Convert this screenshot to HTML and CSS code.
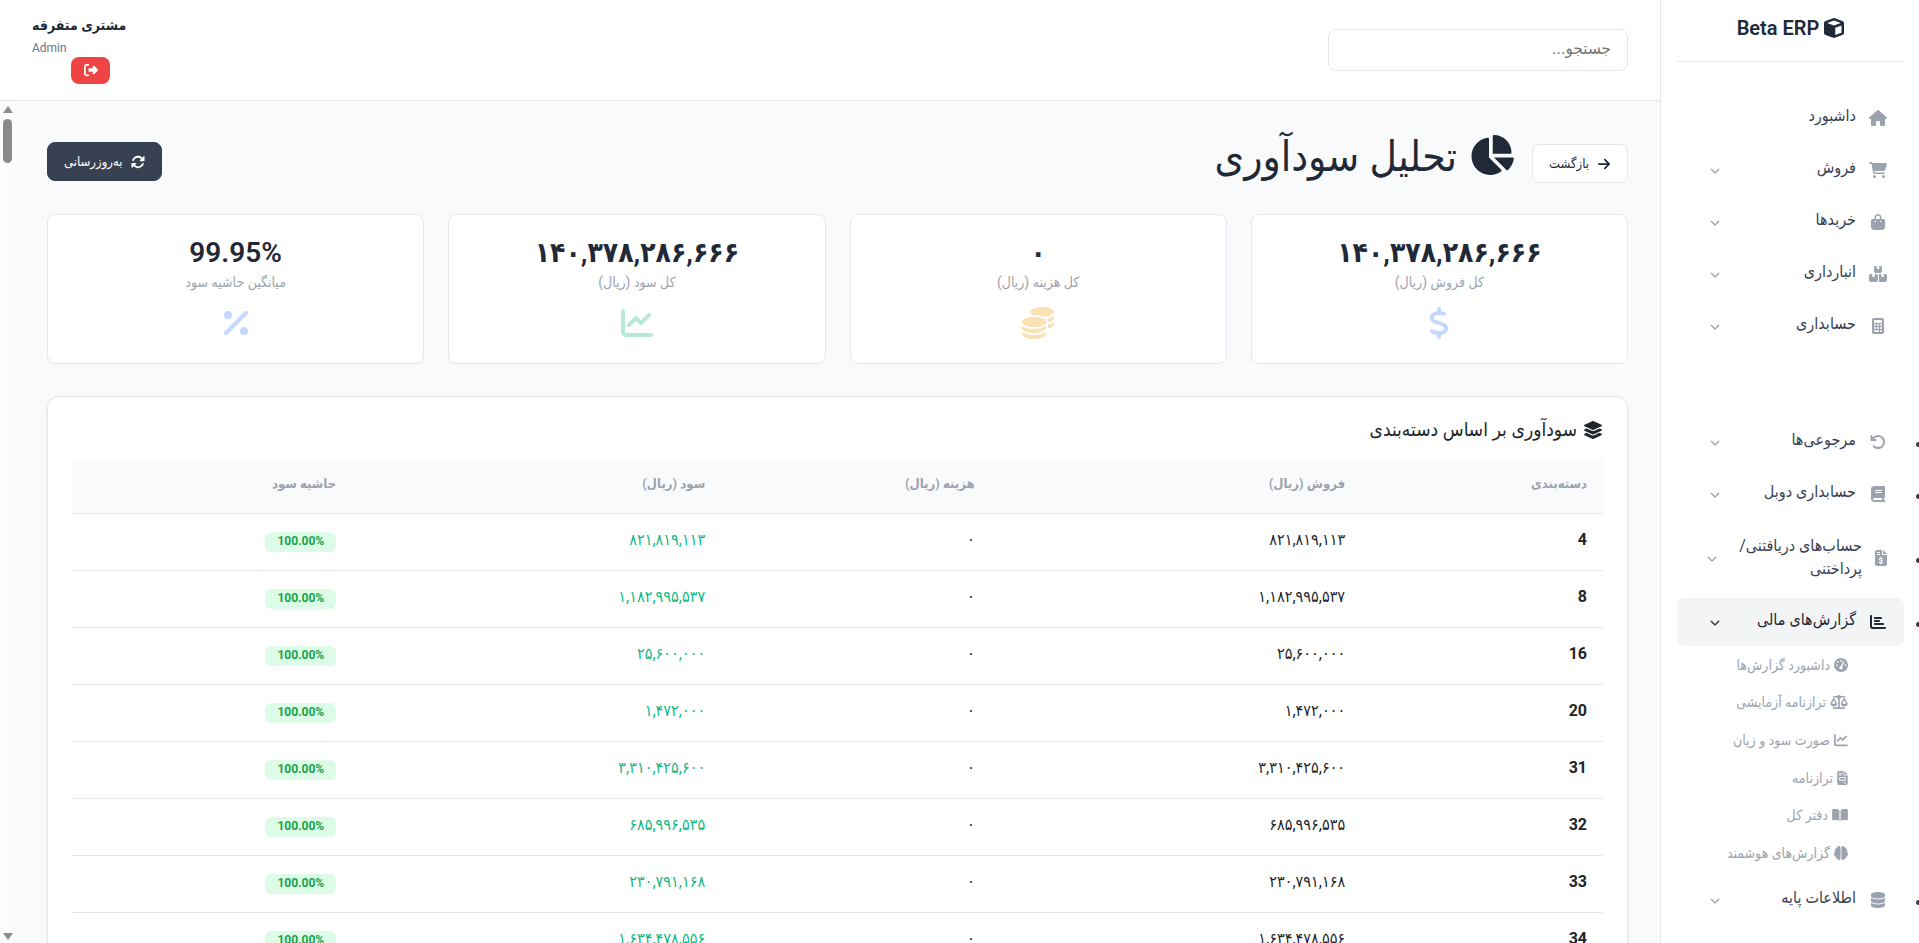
FILE: index.html
```html
<!DOCTYPE html>
<html lang="fa" dir="rtl">
<head>
<meta charset="utf-8">
<meta name="viewport" content="width=device-width, initial-scale=1">
<title>تحلیل سودآوری - Beta ERP</title>
<link rel="stylesheet" href="styles.css">
</head>
<body>
<svg class="sprite" aria-hidden="true">
  <symbol id="cube" viewBox="0 0 512 512"><path d="M234.5 5.7c13.9-5 29.1-5 43.1 0l192 68.6C495 83.4 512 107.5 512 134.6V377.4c0 27-17 51.2-42.5 60.3l-192 68.6c-13.9 5-29.1 5-43.1 0l-192-68.6C17 428.6 0 404.5 0 377.4V134.6c0-27 17-51.2 42.5-60.3l192-68.6zM256 66L82.3 128 256 190l173.7-62L256 66zm32 368.6l160-57.1v-188L288 246.6v188z"/></symbol>
  <symbol id="home" viewBox="0 0 576 512"><path d="M575.8 255.5c0 18-15 32.1-32 32.1h-32l.7 160.2c0 2.7-.2 5.4-.5 8.1V472c0 22.1-17.9 40-40 40H392c-22.1 0-40-17.9-40-40V384c0-17.7-14.3-32-32-32H256c-17.7 0-32 14.3-32 32v88c0 22.1-17.9 40-40 40H104c-22.1 0-40-17.9-40-40V287.6H32c-18 0-32-14-32-32.1c0-9 3-17 10-24L266.4 8c7-7 15-8 22-8s15 2 21 7L564.8 231.5c8 7 12 15 11 24z"/></symbol>
  <symbol id="cart" viewBox="0 0 576 512"><path d="M0 24C0 10.7 10.7 0 24 0H69.5c22 0 41.5 12.8 50.6 32h411c26.3 0 45.5 25 38.6 50.4l-41 152.3c-8.5 31.4-37 53.3-69.5 53.3H170.7l5.4 28.5c2.2 11.3 12.1 19.5 23.6 19.5H488c13.3 0 24 10.7 24 24s-10.7 24-24 24H199.7c-34.6 0-64.3-24.6-70.7-58.5L77.4 54.5c-.7-3.8-4-6.5-7.9-6.5H24C10.7 48 0 37.3 0 24zM128 464a48 48 0 1 1 96 0 48 48 0 1 1 -96 0zm336-48a48 48 0 1 1 0 96 48 48 0 1 1 0-96z"/></symbol>
  <symbol id="bag" viewBox="0 0 448 512"><path d="M160 112c0-35.3 28.7-64 64-64s64 28.7 64 64v48H160V112zm-48 48H48c-26.5 0-48 21.5-48 48V416c0 53 43 96 96 96H352c53 0 96-43 96-96V208c0-26.5-21.5-48-48-48H336V112C336 50.1 285.9 0 224 0S112 50.1 112 112v48zm24 48a24 24 0 1 1 0 48 24 24 0 1 1 0-48zm152 24a24 24 0 1 1 48 0 24 24 0 1 1 -48 0z"/></symbol>
  <symbol id="boxes" viewBox="0 0 576 512"><path d="M248 0H208c-26.5 0-48 21.5-48 48V160c0 35.3 28.7 64 64 64H352c35.3 0 64-28.7 64-64V48c0-26.5-21.5-48-48-48H328V80c0 8.8-7.2 16-16 16H264c-8.8 0-16-7.2-16-16V0zM64 256c-35.3 0-64 28.7-64 64V448c0 35.3 28.7 64 64 64H224c35.3 0 64-28.7 64-64V320c0-35.3-28.7-64-64-64H184v80c0 8.8-7.2 16-16 16H120c-8.8 0-16-7.2-16-16V256H64zM352 512H512c35.3 0 64-28.7 64-64V320c0-35.3-28.7-64-64-64H472v80c0 8.8-7.2 16-16 16H408c-8.8 0-16-7.2-16-16V256H352c-15 0-28.8 5.1-39.7 13.8c4.9 10.4 7.7 22 7.7 34.2V464c0 12.2-2.8 23.8-7.7 34.2C323.2 506.9 337 512 352 512z"/></symbol>
  <symbol id="calc" viewBox="0 0 384 512"><path fill-rule="evenodd" d="M64 0C28.700 0 0 28.700 0 64V448c0 35.300 28.700 64 64 64H320c35.300 0 64-28.700 64-64V64c0-35.300-28.700-64-64-64H64zM96 64H288c17.700 0 32 14.300 32 32v32c0 17.700-14.300 32-32 32H96c-17.700 0-32-14.300-32-32V96c0-17.700 14.300-32 32-32zM64 200h64v48H64zM160 200h64v48h-64zM256 200h64v48h-64zM64 296h64v48H64zM160 296h64v48h-64zM256 296h64v48h-64zM64 392h160v48H64zM256 392h64v48h-64z"/></symbol>
  <symbol id="undo" viewBox="0 0 512 512"><path d="M125.7 160H176c17.7 0 32 14.3 32 32s-14.3 32-32 32H48c-17.700 0-32-14.300-32-32V64c0-17.700 14.300-32 32-32s32 14.300 32 32v51.200L97.600 97.600c87.500-87.500 229.300-87.500 316.800 0s87.500 229.300 0 316.800s-229.300 87.500-316.800 0c-12.500-12.500-12.500-32.800 0-45.300s32.800-12.500 45.300 0c62.500 62.500 163.800 62.500 226.300 0s62.500-163.800 0-226.300s-163.800-62.500-226.300 0L125.700 160z"/></symbol>
  <symbol id="book" viewBox="0 0 448 512"><path d="M96 0C43 0 0 43 0 96V416c0 53 43 96 96 96H384h32c17.7 0 32-14.3 32-32s-14.3-32-32-32V384c17.7 0 32-14.3 32-32V32c0-17.7-14.3-32-32-32H384 96zm0 384H352v64H96c-17.7 0-32-14.3-32-32s14.3-32 32-32zm32-240c0-8.8 7.2-16 16-16H336c8.8 0 16 7.2 16 16s-7.2 16-16 16H144c-8.8 0-16-7.2-16-16zm16 48H336c8.8 0 16 7.2 16 16s-7.2 16-16 16H144c-8.8 0-16-7.2-16-16s7.2-16 16-16z"/></symbol>
  <symbol id="invoice" viewBox="0 0 384 512"><path fill-rule="evenodd" d="M64 0C28.700 0 0 28.700 0 64V448c0 35.300 28.700 64 64 64H320c35.300 0 64-28.700 64-64V160H256c-17.700 0-32-14.300-32-32V0H64zM256 0V128H384L256 0zM64 64h96v32H64zM64 128h96v32H64z"/><path fill="none" stroke="#fff" stroke-width="36" stroke-linecap="round" d="M192 232v28M192 412v28M238 278c-30-20-92-24-92 16c0 48 92 30 92 80c0 42-62 40-96 16"/></symbol>
  <symbol id="bars" viewBox="0 0 512 512"><path d="M32 32c17.7 0 32 14.3 32 32V400c0 8.8 7.2 16 16 16H480c17.7 0 32 14.3 32 32s-14.3 32-32 32H80c-44.2 0-80-35.8-80-80V64C0 46.3 14.3 32 32 32zm96 96c0-17.7 14.3-32 32-32l192 0c17.7 0 32 14.3 32 32s-14.3 32-32 32l-192 0c-17.7 0-32-14.3-32-32zm32 64H288c17.7 0 32 14.3 32 32s-14.3 32-32 32H160c-17.7 0-32-14.3-32-32s14.3-32 32-32zm0 96H416c17.7 0 32 14.3 32 32s-14.3 32-32 32H160c-17.7 0-32-14.3-32-32s14.3-32 32-32z"/></symbol>
  <symbol id="gauge" viewBox="0 0 512 512"><circle cx="256" cy="256" r="256"/><g fill="#fff"><circle cx="144" cy="144" r="32"/><circle cx="256" cy="96" r="32"/><circle cx="96" cy="256" r="32"/><circle cx="416" cy="256" r="32"/><circle cx="256" cy="352" r="64"/></g><path d="M256 352L350 144" stroke="#fff" stroke-width="48" stroke-linecap="round"/></symbol>
  <symbol id="scale" viewBox="0 0 640 512"><path fill="none" stroke="currentColor" stroke-width="60" stroke-linecap="round" d="M128 64H512M320 50V470M128 480H512"/><circle cx="320" cy="76" r="76"/><path fill-rule="evenodd" d="M128 110c14 0 24 8 30 18L256 320c0 54-57 96-128 96S0 374 0 320l98-192c6-10 16-18 30-18zM128 186L60 320H196zM512 110c14 0 24 8 30 18L640 320c0 54-57 96-128 96s-128-42-128-96l98-192c6-10 16-18 30-18zM512 186L444 320H580z"/></symbol>
  <symbol id="line" viewBox="0 0 512 512"><path d="M64 64c0-17.7-14.3-32-32-32S0 46.3 0 64V400c0 44.2 35.8 80 80 80H480c17.7 0 32-14.3 32-32s-14.3-32-32-32H80c-8.8 0-16-7.2-16-16V64zm406.6 86.6c12.5-12.5 12.5-32.8 0-45.3s-32.8-12.5-45.3 0L320 210.700l-57.400-57.400c-12.500-12.500-32.800-12.500-45.300 0l-112 112c-12.500 12.500-12.500 32.800 0 45.300s32.800 12.500 45.300 0L240 221.300l57.400 57.400c12.500 12.500 32.800 12.500 45.300 0l128-128z"/></symbol>
  <symbol id="file" viewBox="0 0 384 512"><path fill-rule="evenodd" d="M64 0C28.700 0 0 28.700 0 64V448c0 35.300 28.700 64 64 64H320c35.300 0 64-28.700 64-64V160H256c-17.700 0-32-14.300-32-32V0H64zM256 0V128H384L256 0zM64 64h96v32H64zM64 128h96v32H64zM96 224H288c18 0 32 14 32 32v64c0 18-14 32-32 32H96c-18 0-32-14-32-32V256c0-18 14-32 32-32zM96 256V320H288V256zM224 416h96v32h-96z"/></symbol>
  <symbol id="open" viewBox="0 0 576 512"><path d="M266 78V480C210 440 120 430 32 448C14 452 0 440 0 424V72C0 58 8 48 22 44C110 22 210 34 266 78zM310 78V480C366 440 456 430 544 448C562 452 576 440 576 424V72C576 58 568 48 554 44C466 22 366 34 310 78z"/></symbol>
  <symbol id="brain" viewBox="0 0 512 512"><path d="M184 0c31 0 56 25 56 56V456c0 31-25 56-56 56c-29 0-53-22-56-50c-40 3-74-27-72-74c-36-14-56-46-56-82c0-28 12-54 34-70c-28-36-12-92 30-108c-8-38 20-72 56-76c2-28 30-52 64-52zM328 0c-31 0-56 25-56 56V456c0 31 25 56 56 56c29 0 53-22 56-50c40 3 74-27 72-74c36-14 56-46 56-82c0-28-12-54-34-70c28-36 12-92-30-108c8-38-20-72-56-76c-2-28-30-52-64-52z"/></symbol>
  <symbol id="db" viewBox="0 0 448 512"><path d="M448 80v48c0 44-100 80-224 80S0 172 0 128V80C0 36 100 0 224 0s224 36 224 80zM0 186c50 40 140 54 224 54s174-14 224-54V288c0 44-100 80-224 80S0 332 0 288zM0 346c50 40 140 54 224 54s174-14 224-54v86c0 44-100 80-224 80S0 476 0 432z"/></symbol>
  <symbol id="down" viewBox="0 0 512 512"><path d="M233.4 406.6c12.5 12.5 32.8 12.5 45.3 0l192-192c12.5-12.5 12.5-32.8 0-45.3s-32.8-12.5-45.3 0L256 338.7 86.6 169.4c-12.5-12.5-32.8-12.5-45.3 0s-12.5 32.8 0 45.3l192 192z"/></symbol>
  <symbol id="logout" viewBox="0 0 512 512"><path d="M377.9 105.9L500.7 228.7c7.2 7.2 11.3 17.1 11.3 27.3s-4.1 20.1-11.3 27.3L377.9 406.1c-6.4 6.4-15 9.9-24 9.9c-18.7 0-33.9-15.2-33.9-33.9l0-62.1-128 0c-17.7 0-32-14.3-32-32l0-64c0-17.7 14.3-32 32-32l128 0 0-62.1c0-18.700 15.200-33.900 33.900-33.900c9 0 17.600 3.600 24 9.900zM160 96L96 96c-17.700 0-32 14.300-32 32l0 256c0 17.700 14.300 32 32 32l64 0c17.700 0 32 14.300 32 32s-14.300 32-32 32l-64 0c-53 0-96-43-96-96L0 128C0 75 43 32 96 32l64 0c17.700 0 32 14.300 32 32s-14.300 32-32 32z"/></symbol>
  <symbol id="right" viewBox="0 0 448 512"><path d="M438.6 278.6c12.5-12.5 12.5-32.8 0-45.3l-160-160c-12.5-12.5-32.8-12.5-45.3 0s-12.5 32.8 0 45.3L338.8 224 32 224c-17.7 0-32 14.3-32 32s14.3 32 32 32l306.7 0L233.4 393.4c-12.5 12.5-12.5 32.8 0 45.3s32.8 12.5 45.3 0l160-160z"/></symbol>
  <symbol id="pie" viewBox="0 0 576 512"><path d="M304 240V16.6c0-9 7-16.6 16-16.6C443.7 0 544 100.3 544 224c0 9-7.6 16-16.6 16H304zM32 272C32 150.7 122.1 50.3 239 34.3c9.2-1.3 17 6.1 17 15.4V288L412.5 444.5c6.7 6.7 6.2 17.7-1.5 23.1C371.8 495.6 323.8 512 272 512C139.5 512 32 404.6 32 272zm526.4 16c9.3 0 16.6 7.8 15.4 17c-7.7 55.9-34.6 105.600-73.900 142.300c-6 5.600-15.400 5.200-21.200-.7L320 288H558.400z"/></symbol>
  <symbol id="sync" viewBox="0 0 512 512"><path d="M142.9 142.9c62.2-62.2 162.7-62.5 225.3-1L327 183c-6.9 6.9-8.9 17.2-5.2 26.2s12.5 14.8 22.2 14.8H472c13.3 0 24-10.7 24-24V72c0-9.7-5.8-18.5-14.8-22.2s-19.3-1.7-26.2 5.2L413.4 96.6c-87.6-86.5-228.7-86.2-315.8 1C73.2 122 55.6 150.7 44.8 181.4c-5.9 16.7 2.9 34.9 19.5 40.8s34.9-2.9 40.8-19.5c7.7-21.8 20.2-42.3 37.8-59.8zM16 312V440c0 9.700 5.800 18.500 14.800 22.200s19.300 1.700 26.200-5.200l41.600-41.600c87.600 86.500 228.700 86.200 315.800-1c24.400-24.400 42.100-53.100 52.900-83.700c5.900-16.700-2.900-34.900-19.500-40.800s-34.900 2.900-40.800 19.500c-7.700 21.800-20.200 42.300-37.800 59.800c-62.200 62.200-162.700 62.500-225.300 1L185 329c6.900-6.900 8.900-17.200 5.200-26.200s-12.500-14.800-22.200-14.800H40c-13.300 0-24 10.700-24 24z"/></symbol>
  <symbol id="dollar" viewBox="0 0 320 512"><path d="M160 0c17.7 0 32 14.3 32 32V67.7c1.6 .2 3.1 .4 4.7 .7c.4 .1 .7 .1 1.1 .2l48 8.8c17.4 3.2 28.9 19.9 25.7 37.2s-19.9 28.9-37.2 25.7l-47.5-8.7c-31.3-4.6-58.9-1.5-78.3 6.2s-27.2 18.3-29 28.1c-2 10.7-.5 16.7 1.2 20.4c1.8 3.9 5.5 8.3 12.8 13.2c16.3 10.7 41.3 17.7 73.7 26.3l2.9 .8c28.6 7.6 63.6 16.8 89.6 33.8c14.2 9.3 27.6 21.9 35.9 39.5c8.5 17.9 10.3 37.9 6.4 59.2c-6.9 38-33.1 63.4-65.6 76.7c-13.7 5.6-28.6 9.2-44.4 11V480c0 17.7-14.3 32-32 32s-32-14.3-32-32V445.100c-.4-.1-.9-.1-1.300-.2l-.2 0c-24.400-3.800-64.500-14.300-91.500-26.300c-16.100-7.200-23.400-26.100-16.200-42.200s26.100-23.400 42.200-16.200c20.900 9.300 55.300 18.500 75.200 21.600c31.900 4.700 58.200 2 76-5.300c16.900-6.900 24.600-16.900 26.800-28.900c1.900-10.600 .4-16.700-1.300-20.400c-1.900-4-5.600-8.400-13-13.300c-16.400-10.700-41.500-17.700-74-26.300l-2.800-.7C119.400 279.300 84.400 270 58.400 253c-14.200-9.300-27.500-22-35.800-39.600c-8.400-17.900-10.100-37.900-6.100-59.200C23.700 116 52.300 91.200 84.800 78.300c13.300-5.300 27.900-8.900 43.200-11V32c0-17.700 14.300-32 32-32z"/></symbol>
  <symbol id="coins" viewBox="0 0 512 512"><path d="M512 80c0 18-14.3 34.6-38.4 48c-29.1 16.1-72.5 27.5-122.3 30.9c-3.7-1.8-7.4-3.5-11.3-5C300.6 137.4 248.2 128 192 128c-8.3 0-16.4 .2-24.5 .6l-1.1-.6C142.3 114.6 128 98 128 80c0-44.2 86-80 192-80S512 35.8 512 80zM160.7 161.1c10.2-.7 20.7-1.1 31.3-1.1c62.2 0 117.4 12.3 152.5 31.4C369.3 204.9 384 221.700 384 240c0 4-.7 7.900-2.100 11.700c-4.600 13.200-17 25.300-35 35.500c-35 20-92 32.800-154.900 32.800c-59.600 0-112.900-11.300-148.200-29.100c-1.900-.9-3.700-1.900-5.500-2.900C14.300 274.600 0 258 0 240c0-34.800 53.400-64.500 128-75.400c10.500-1.500 21.400-2.700 32.700-3.500zM416 240c0-21.900-10.600-39.900-24.100-53.400c28.300-4.400 54.200-11.400 76.200-20.500c16.300-6.800 31.500-15.200 43.900-25.500V176c0 19.300-16.500 37.100-43.800 50.900c-14.600 7.400-32.400 13.700-52.400 18.500zM384 336c0 18-14.300 34.600-38.400 48c-35 19.400-90.800 32-153.600 32S73.400 403.400 38.400 384C14.300 370.600 0 354 0 336V300.600c12.500 10.300 27.600 18.700 43.900 25.500C83.400 342.600 135.800 352 192 352s108.600-9.400 148.100-25.900c16.300-6.800 31.400-15.200 43.900-25.500zM416 336V278.100c19-4.200 36.500-9.500 52.100-16c16.300-6.800 31.500-15.200 43.900-25.500V272c0 10.500-5 21-14.900 30.900c-16.300 16.300-45 29.700-81.300 38.400zM192 448c56.200 0 108.600-9.400 148.100-25.900c16.300-6.800 31.500-15.200 43.900-25.500V432c0 44.200-86 80-192 80S0 476.200 0 432V396.600c12.500 10.300 27.600 18.700 43.900 25.500C83.400 438.600 135.800 448 192 448z"/></symbol>
  <symbol id="percent" viewBox="0 0 384 512"><path d="M374.6 118.6c12.5-12.5 12.5-32.8 0-45.3s-32.8-12.5-45.3 0l-320 320c-12.5 12.5-12.5 32.8 0 45.3s32.8 12.5 45.3 0l320-320zM128 128A64 64 0 1 0 0 128a64 64 0 1 0 128 0zM384 384a64 64 0 1 0 -128 0 64 64 0 1 0 128 0z"/></symbol>
  <symbol id="layers" viewBox="0 0 576 512"><path d="M264.500 5.200c14.900-6.900 32.100-6.900 47 0l218.600 101c8.500 3.900 13.900 12.400 13.900 21.800s-5.400 17.900-13.900 21.800l-218.600 101c-14.900 6.900-32.100 6.900-47 0L45.900 149.800C37.400 145.800 32 137.300 32 128s5.400-17.900 13.900-21.800L264.500 5.200zM476.900 209.600l53.200 24.600c8.500 3.900 13.900 12.400 13.900 21.800s-5.400 17.900-13.900 21.800l-218.600 101c-14.900 6.900-32.100 6.900-47 0L45.900 277.800C37.400 273.800 32 265.300 32 256s5.400-17.900 13.900-21.800l53.200-24.600 152 70.200c23.400 10.800 50.400 10.800 73.800 0l152-70.200zm-152 198.200l152-70.200 53.200 24.600c8.500 3.900 13.900 12.400 13.900 21.800s-5.400 17.900-13.900 21.800l-218.600 101c-14.900 6.900-32.100 6.900-47 0L45.900 405.800C37.400 401.800 32 393.300 32 384s5.400-17.900 13.900-21.800l53.200-24.600 152 70.200c23.400 10.800 50.400 10.800 73.800 0z"/></symbol>
</svg>

<div class="app">
  <aside class="sidebar">
    <div class="brand"><svg class="i20"><use href="#cube"/></svg><span dir="ltr">Beta ERP</span></div>
    <nav>
      <ul class="menu plain">
        <li><a href="#"><svg class="ico"><use href="#home"/></svg><span class="label">داشبورد</span></a></li>
        <li><a href="#"><svg class="ico"><use href="#cart"/></svg><span class="label">فروش</span><svg class="chev"><use href="#down"/></svg></a></li>
        <li><a href="#"><svg class="ico"><use href="#bag"/></svg><span class="label">خریدها</span><svg class="chev"><use href="#down"/></svg></a></li>
        <li><a href="#"><svg class="ico"><use href="#boxes"/></svg><span class="label">انبارداری</span><svg class="chev"><use href="#down"/></svg></a></li>
        <li><a href="#"><svg class="ico"><use href="#calc"/></svg><span class="label">حسابداری</span><svg class="chev"><use href="#down"/></svg></a></li>
      </ul>
      <ul class="menu extra">
        <li><a href="#"><svg class="ico"><use href="#undo"/></svg><span class="label">مرجوعی‌ها</span><svg class="chev"><use href="#down"/></svg></a></li>
        <li><a href="#"><svg class="ico"><use href="#book"/></svg><span class="label">حسابداری دوبل</span><svg class="chev"><use href="#down"/></svg></a></li>
        <li><a href="#" class="tall"><svg class="ico"><use href="#invoice"/></svg><span class="label">حساب‌های دریافتنی/<br>پرداختنی</span><svg class="chev"><use href="#down"/></svg></a></li>
        <li><a href="#" class="active"><svg class="ico"><use href="#bars"/></svg><span class="label">گزارش‌های مالی</span><svg class="chev"><use href="#down"/></svg></a>
          <ul class="sub">
            <li><a href="#"><svg class="i14"><use href="#gauge"/></svg>داشبورد گزارش‌ها</a></li>
            <li><a href="#"><svg class="i14 w18"><use href="#scale"/></svg>ترازنامه آزمایشی</a></li>
            <li><a href="#"><svg class="i14"><use href="#line"/></svg>صورت سود و زیان</a></li>
            <li><a href="#"><svg class="i14 w11"><use href="#file"/></svg>ترازنامه</a></li>
            <li><a href="#"><svg class="i14 w16"><use href="#open"/></svg>دفتر کل</a></li>
            <li><a href="#"><svg class="i14"><use href="#brain"/></svg>گزارش‌های هوشمند</a></li>
          </ul>
        </li>
        <li><a href="#"><svg class="ico"><use href="#db"/></svg><span class="label">اطلاعات پایه</span><svg class="chev"><use href="#down"/></svg></a></li>
      </ul>
    </nav>
  </aside>

  <div class="page">
    <header class="topbar">
      <input class="search" type="text" placeholder="جستجو..." aria-label="جستجو">
      <div class="user">
        <div class="name">مشتری متفرقه</div>
        <div class="role">Admin</div>
        <button class="logout" type="button" aria-label="خروج"><svg class="i14"><use href="#logout"/></svg></button>
      </div>
    </header>
    <div class="scroller">
      <main class="content">
        <div class="heading">
          <button class="btn back" type="button"><svg class="i14"><use href="#right"/></svg>بازگشت</button>
          <h1><svg class="pie"><use href="#pie"/></svg>تحلیل سودآوری</h1>
          <button class="btn refresh" type="button"><svg class="i14"><use href="#sync"/></svg>به‌روزرسانی</button>
        </div>
        <section class="stats">
          <div class="stat"><div class="value">۱۴۰,۳۷۸,۲۸۶,۶۶۶</div><div class="caption">کل فروش (ریال)</div><svg class="blue"><use href="#dollar"/></svg></div>
          <div class="stat"><div class="value">۰</div><div class="caption">کل هزینه (ریال)</div><svg class="amber"><use href="#coins"/></svg></div>
          <div class="stat"><div class="value">۱۴۰,۳۷۸,۲۸۶,۶۶۶</div><div class="caption">کل سود (ریال)</div><svg class="green"><use href="#line"/></svg></div>
          <div class="stat"><div class="value" dir="ltr">99.95%</div><div class="caption">میانگین حاشیه سود</div><svg class="blue"><use href="#percent"/></svg></div>
        </section>
        <section class="panel">
          <h2><svg class="layers"><use href="#layers"/></svg>سودآوری بر اساس دسته‌بندی</h2>
          <table>
            <colgroup><col class="c1"><col class="c2"><col class="c3"><col class="c4"><col class="c5"></colgroup>
            <thead><tr><th>دسته‌بندی</th><th>فروش (ریال)</th><th>هزینه (ریال)</th><th>سود (ریال)</th><th>حاشیه سود</th></tr></thead>
            <tbody>
              <tr><td class="id">4</td><td>۸۲۱,۸۱۹,۱۱۳</td><td>۰</td><td class="profit">۸۲۱,۸۱۹,۱۱۳</td><td><span class="badge" dir="ltr">100.00%</span></td></tr>
              <tr><td class="id">8</td><td>۱,۱۸۲,۹۹۵,۵۳۷</td><td>۰</td><td class="profit">۱,۱۸۲,۹۹۵,۵۳۷</td><td><span class="badge" dir="ltr">100.00%</span></td></tr>
              <tr><td class="id">16</td><td>۲۵,۶۰۰,۰۰۰</td><td>۰</td><td class="profit">۲۵,۶۰۰,۰۰۰</td><td><span class="badge" dir="ltr">100.00%</span></td></tr>
              <tr><td class="id">20</td><td>۱,۴۷۲,۰۰۰</td><td>۰</td><td class="profit">۱,۴۷۲,۰۰۰</td><td><span class="badge" dir="ltr">100.00%</span></td></tr>
              <tr><td class="id">31</td><td>۳,۳۱۰,۴۲۵,۶۰۰</td><td>۰</td><td class="profit">۳,۳۱۰,۴۲۵,۶۰۰</td><td><span class="badge" dir="ltr">100.00%</span></td></tr>
              <tr><td class="id">32</td><td>۶۸۵,۹۹۶,۵۳۵</td><td>۰</td><td class="profit">۶۸۵,۹۹۶,۵۳۵</td><td><span class="badge" dir="ltr">100.00%</span></td></tr>
              <tr><td class="id">33</td><td>۲۳۰,۷۹۱,۱۶۸</td><td>۰</td><td class="profit">۲۳۰,۷۹۱,۱۶۸</td><td><span class="badge" dir="ltr">100.00%</span></td></tr>
              <tr><td class="id">34</td><td>۱,۶۳۴,۴۷۸,۵۵۶</td><td>۰</td><td class="profit">۱,۶۳۴,۴۷۸,۵۵۶</td><td><span class="badge" dir="ltr">100.00%</span></td></tr>
            </tbody>
          </table>
        </section>
      </main>
      <div class="scrollbar" aria-hidden="true">
        <svg class="arrow" viewBox="0 0 10 8"><path d="M5 0L10 7H0z"/></svg>
        <div class="thumb"></div>
        <svg class="arrow end" viewBox="0 0 10 8"><path d="M5 8L10 1H0z"/></svg>
      </div>
    </div>
  </div>
</div>
</body>
</html>
```
FILE: styles.css
```css
* { box-sizing: border-box; }
body {
  margin: 0;
  background: #f9fafb;
  color: #212529;
  font: 16px/24px Roboto, "DejaVu Sans Condensed", "DejaVu Sans", sans-serif;
}
ul { margin: 0; padding: 0; }
a { color: inherit; text-decoration: none; }
button, input { font: inherit; }
svg { fill: currentColor; flex: none; }
.sprite { position: absolute; width: 0; height: 0; }
.app { display: flex; height: 100vh; overflow: hidden; }

.sidebar {
  flex: none;
  width: 259px;
  padding: 0 15px 0 16px;
  background: #fff;
  border-left: 1px solid #e5e7eb;
  color: #374151;
  overflow: hidden;
}
.brand {
  display: flex;
  justify-content: center;
  align-items: center;
  gap: 5px;
  height: 62px;
  padding-bottom: 5px;
  border-bottom: 1px solid #e5e7eb;
  color: #1f2937;
  font-size: 20px;
  font-weight: 600;
}
.i20 { width: 20px; height: 20px; }
.i14 { width: 14px; height: 14px; }
.menu { padding-top: 32px; list-style: none; }
.menu.extra { padding-top: 64px; list-style: disc; }
.menu > li { margin-bottom: 4px; }
.menu > li > a {
  display: flex;
  align-items: center;
  gap: 12px;
  padding: 12px 16px;
  border-radius: 8px;
}
.ico { width: 20px; height: 16px; color: #9ca3af; }
.label { flex: 1; min-width: 0; white-space: nowrap; padding-bottom: 4px; line-height: 20px; }
.chev { width: 10px; height: 11px; margin-left: 17px; color: #9ca3af; }
.menu > li > .tall .ico { width: 14px; }
.menu > li > .tall .chev { margin-left: 14px; }
.menu > li > .tall .label { padding-bottom: 2px; line-height: 23px; }
.menu > li > .active { background: #f3f4f6; color: #1f2937; font-weight: 500; }
.menu > li > .active .ico, .menu > li > .active .chev { color: #1f2937; }
.sub {
  display: grid;
  grid-auto-rows: 1fr;
  height: 226px;
  margin-bottom: 3px;
  padding-right: 56px;
  list-style: none;
  color: #9ca3af;
  font-size: 14px;
}
.sub a { display: flex; align-items: center; gap: 4px; height: 100%; white-space: nowrap; }
.w18 { width: 18px; }
.w16 { width: 16px; }
.w11 { width: 11px; }

.page { flex: 1; min-width: 0; display: flex; flex-direction: column; }
.topbar {
  display: flex;
  justify-content: space-between;
  align-items: center;
  height: 101px;
  padding: 0 32px;
  background: #fff;
  border-bottom: 1px solid #e5e7eb;
}
.search {
  width: 300px;
  height: 42px;
  padding: 0 16px 4px;
  border: 1px solid #e5e7eb;
  border-radius: 8px;
  background: #fff;
  font-size: 17px;
}
.search::placeholder { color: #757575; opacity: 1; }
.user { display: flex; flex-direction: column; align-items: flex-end; padding-bottom: 1px; }
.name { padding-bottom: 4px; line-height: 20px; color: #1f2937; font-size: 14px; font-weight: 600; }
.role { line-height: 18px; color: #6b7280; font-size: 12px; }
.logout {
  align-self: flex-start;
  display: flex;
  margin-right: 16px;
  padding: 6px 12px 7px 13px;
  border: 0;
  border-radius: 8px;
  background: #ef4444;
  color: #fff;
}
.scroller { flex: 1; min-height: 0; display: flex; overflow: hidden; }
.scrollbar {
  flex: none;
  display: flex;
  flex-direction: column;
  align-items: center;
  width: 15px;
  padding: 5px 0 3px;
  background: #fcfcfc;
  color: #8b8b8b;
}
.thumb { width: 9px; height: 44px; margin-top: 5px; border-radius: 5px; background: #8b8b8b; }
.arrow { width: 10px; height: 8px; }
.arrow.end { margin-top: auto; }

.content { flex: 1; min-width: 0; padding: 32px; }
.heading { display: flex; align-items: center; margin-bottom: 24px; height: 57px; }
h1 {
  display: flex;
  align-items: center;
  gap: 12px;
  margin: 0 18px 0 auto;
  padding-bottom: 10px;
  color: #1f2937;
  font-size: 42px;
  font-weight: 500;
  line-height: 48px;
}
.pie { width: 45px; height: 40px; margin-bottom: 4px; }
.btn {
  display: flex;
  align-items: center;
  gap: 8px;
  height: 39px;
  padding: 0 16px;
  border: 1px solid #e5e7eb;
  border-radius: 8px;
  background: #fff;
  color: #1f2937;
  font-size: 13px;
  font-weight: 500;
  white-space: nowrap;
}
.back { margin-top: 4px; }
.refresh { background: #374151; border-color: #374151; color: #fff; }

.stats { display: grid; grid-template-columns: repeat(4, 1fr); gap: 24px; margin-bottom: 32px; }
.stat {
  display: flex;
  flex-direction: column;
  align-items: center;
  padding: 20px 16px 24px;
  border: 1px solid #e5e7eb;
  border-radius: 8px;
  background: #fff;
}
.value { color: #1f2937; font-size: 28px; font-weight: 600; line-height: 36px; }
.caption { margin-bottom: 14px; color: #9ca3af; font-size: 14px; line-height: 22px; }
.stat svg { width: 32px; height: 32px; opacity: .3; }
.blue { color: #3b82f6; }
.amber { color: #f59e0b; }
.green { color: #10b981; }

.panel {
  padding: 21px 24px 24px;
  border: 1px solid #e5e7eb;
  border-radius: 12px;
  background: #fff;
  box-shadow: 0 1px 3px rgba(0, 0, 0, .08);
}
h2 { display: flex; align-items: center; gap: 6px; margin: 0 0 18px; font-size: 19px; font-weight: 500; line-height: 24px; }
.layers { width: 20px; height: 18px; }
table { width: 100%; table-layout: fixed; border-collapse: collapse; }
.c1 { width: 15.8%; }
.c2 { width: 24.2%; }
.c3 { width: 17.6%; }
.c4 { width: 24.1%; }
.c5 { width: 18.3%; }
th, td { padding: 0 16px 4px; border-bottom: 1px solid #e5e7eb; text-align: right; }
th { height: 53px; background: #f9fafb; color: #9ca3af; font-size: 13px; font-weight: 600; }
td { height: 57px; }
.id { font-weight: 700; }
.profit { color: #10b981; }
.badge {
  display: inline-block;
  padding: 0 12px 2px;
  border-radius: 6px;
  background: #dcfce7;
  color: #16a34a;
  font-size: 12px;
  font-weight: 700;
  line-height: 18px;
}
```
